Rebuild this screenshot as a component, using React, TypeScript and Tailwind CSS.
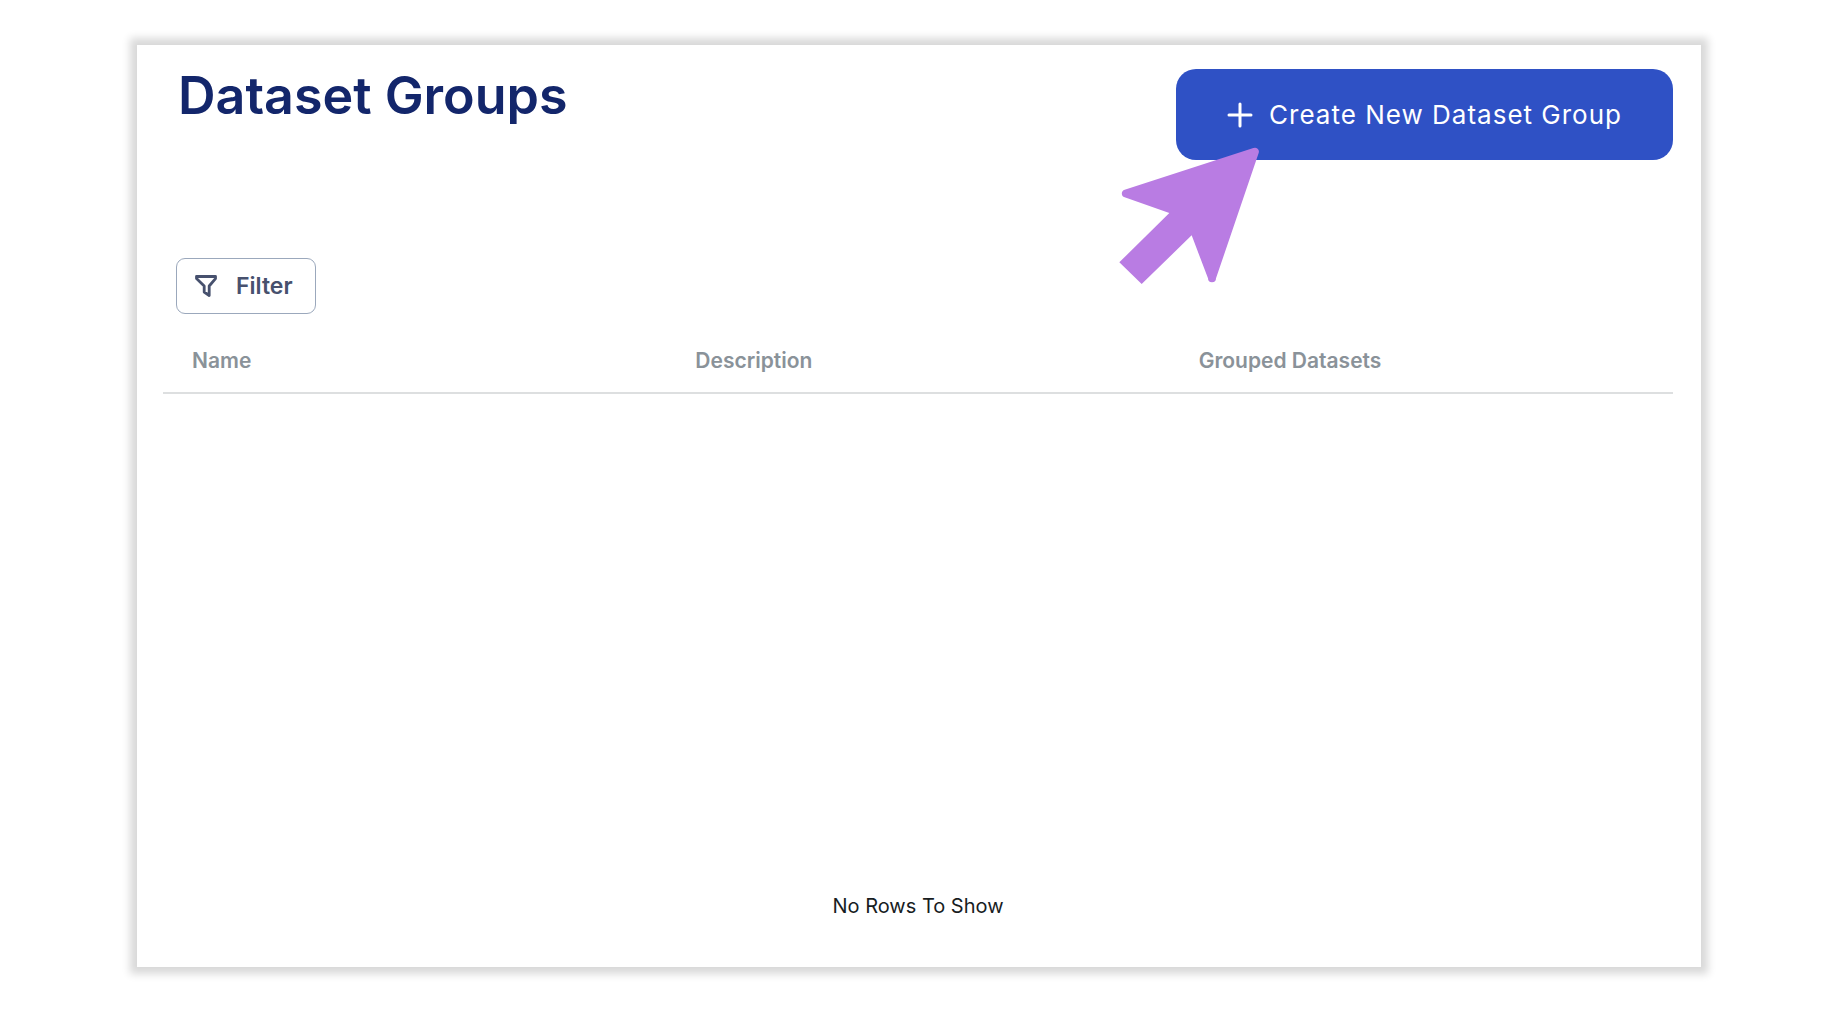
const columns = ["Name", "Description", "Grouped Datasets"]

function PlusIcon() {
  return (
    <svg viewBox="0 0 26 26" className="h-[26px] w-[26px]" fill="none" aria-hidden="true">
      <path d="M13 2 V24 M2 13 H24" stroke="currentColor" strokeWidth="3" strokeLinecap="round" />
    </svg>
  )
}

function FilterIcon() {
  return (
    <svg viewBox="0 0 24 24" className="h-6 w-6" fill="none" aria-hidden="true">
      <path
        d="M2.5 2.5 H21.5 V4.6 L15.2 12 V21.5 L10.2 18 V12 L2.5 4.6 Z"
        stroke="currentColor"
        strokeWidth="2.8"
        strokeLinejoin="round"
      />
    </svg>
  )
}

function PointerArrow() {
  return (
    <svg
      viewBox="0 0 480 450"
      className="pointer-events-none absolute top-[71px] -left-[66px] h-[150px] w-[160px]"
      aria-hidden="true"
    >
      <path
        d="M44 149 L430 24 A12 12 0 0 1 446 39 L318 415 A12 12 0 0 1 294 415 L245 286 L95 432 L28 367 L178 219 L44 172 A12 12 0 0 1 44 149 Z"
        fill="#b97ce3"
      />
    </svg>
  )
}

function CreateButton() {
  return (
    <div className="relative">
      <button
        type="button"
        className="flex h-[91px] items-center gap-4 rounded-[20px] bg-[#2f51c5] px-[51px] text-[26px] tracking-[1px] text-white"
      >
        <PlusIcon />
        Create New Dataset Group
      </button>
      <PointerArrow />
    </div>
  )
}

export default function App() {
  return (
    <div className="flex min-h-screen bg-white px-[137px] pt-[45px] pb-[47px] font-['Inter',sans-serif]">
      <main className="flex flex-1 flex-col bg-white pt-6 pr-7 pl-[26px] shadow-[0_0_8px_7px_#d9d9d9]">
        <header className="flex items-start justify-between pl-[15px]">
          <h1 className="text-[52px] leading-[54px] font-semibold text-[#13266b]">Dataset Groups</h1>
          <CreateButton />
        </header>

        <div className="mt-[98px] pl-[13px]">
          <button
            type="button"
            className="flex h-14 w-[140px] items-center gap-[18px] rounded-[9px] border border-[#9ba8bc] px-[17px] text-[23px] font-semibold text-[#47516e]"
          >
            <FilterIcon />
            Filter
          </button>
        </div>

        <table className="mt-[14px] w-full table-fixed border-collapse">
          <thead>
            <tr className="h-[65px] border-b-2 border-[#dddfe0]">
              {columns.map((column) => (
                <th key={column} scope="col" className="px-[29px] pt-0.5 text-left text-[21px] font-semibold text-[#8a9299]">
                  {column}
                </th>
              ))}
            </tr>
          </thead>
        </table>

        <div className="flex flex-1 items-end justify-center pb-[46px]">
          <p className="text-[20px] leading-[30px] text-[#181d1f]">No Rows To Show</p>
        </div>
      </main>
    </div>
  )
}
